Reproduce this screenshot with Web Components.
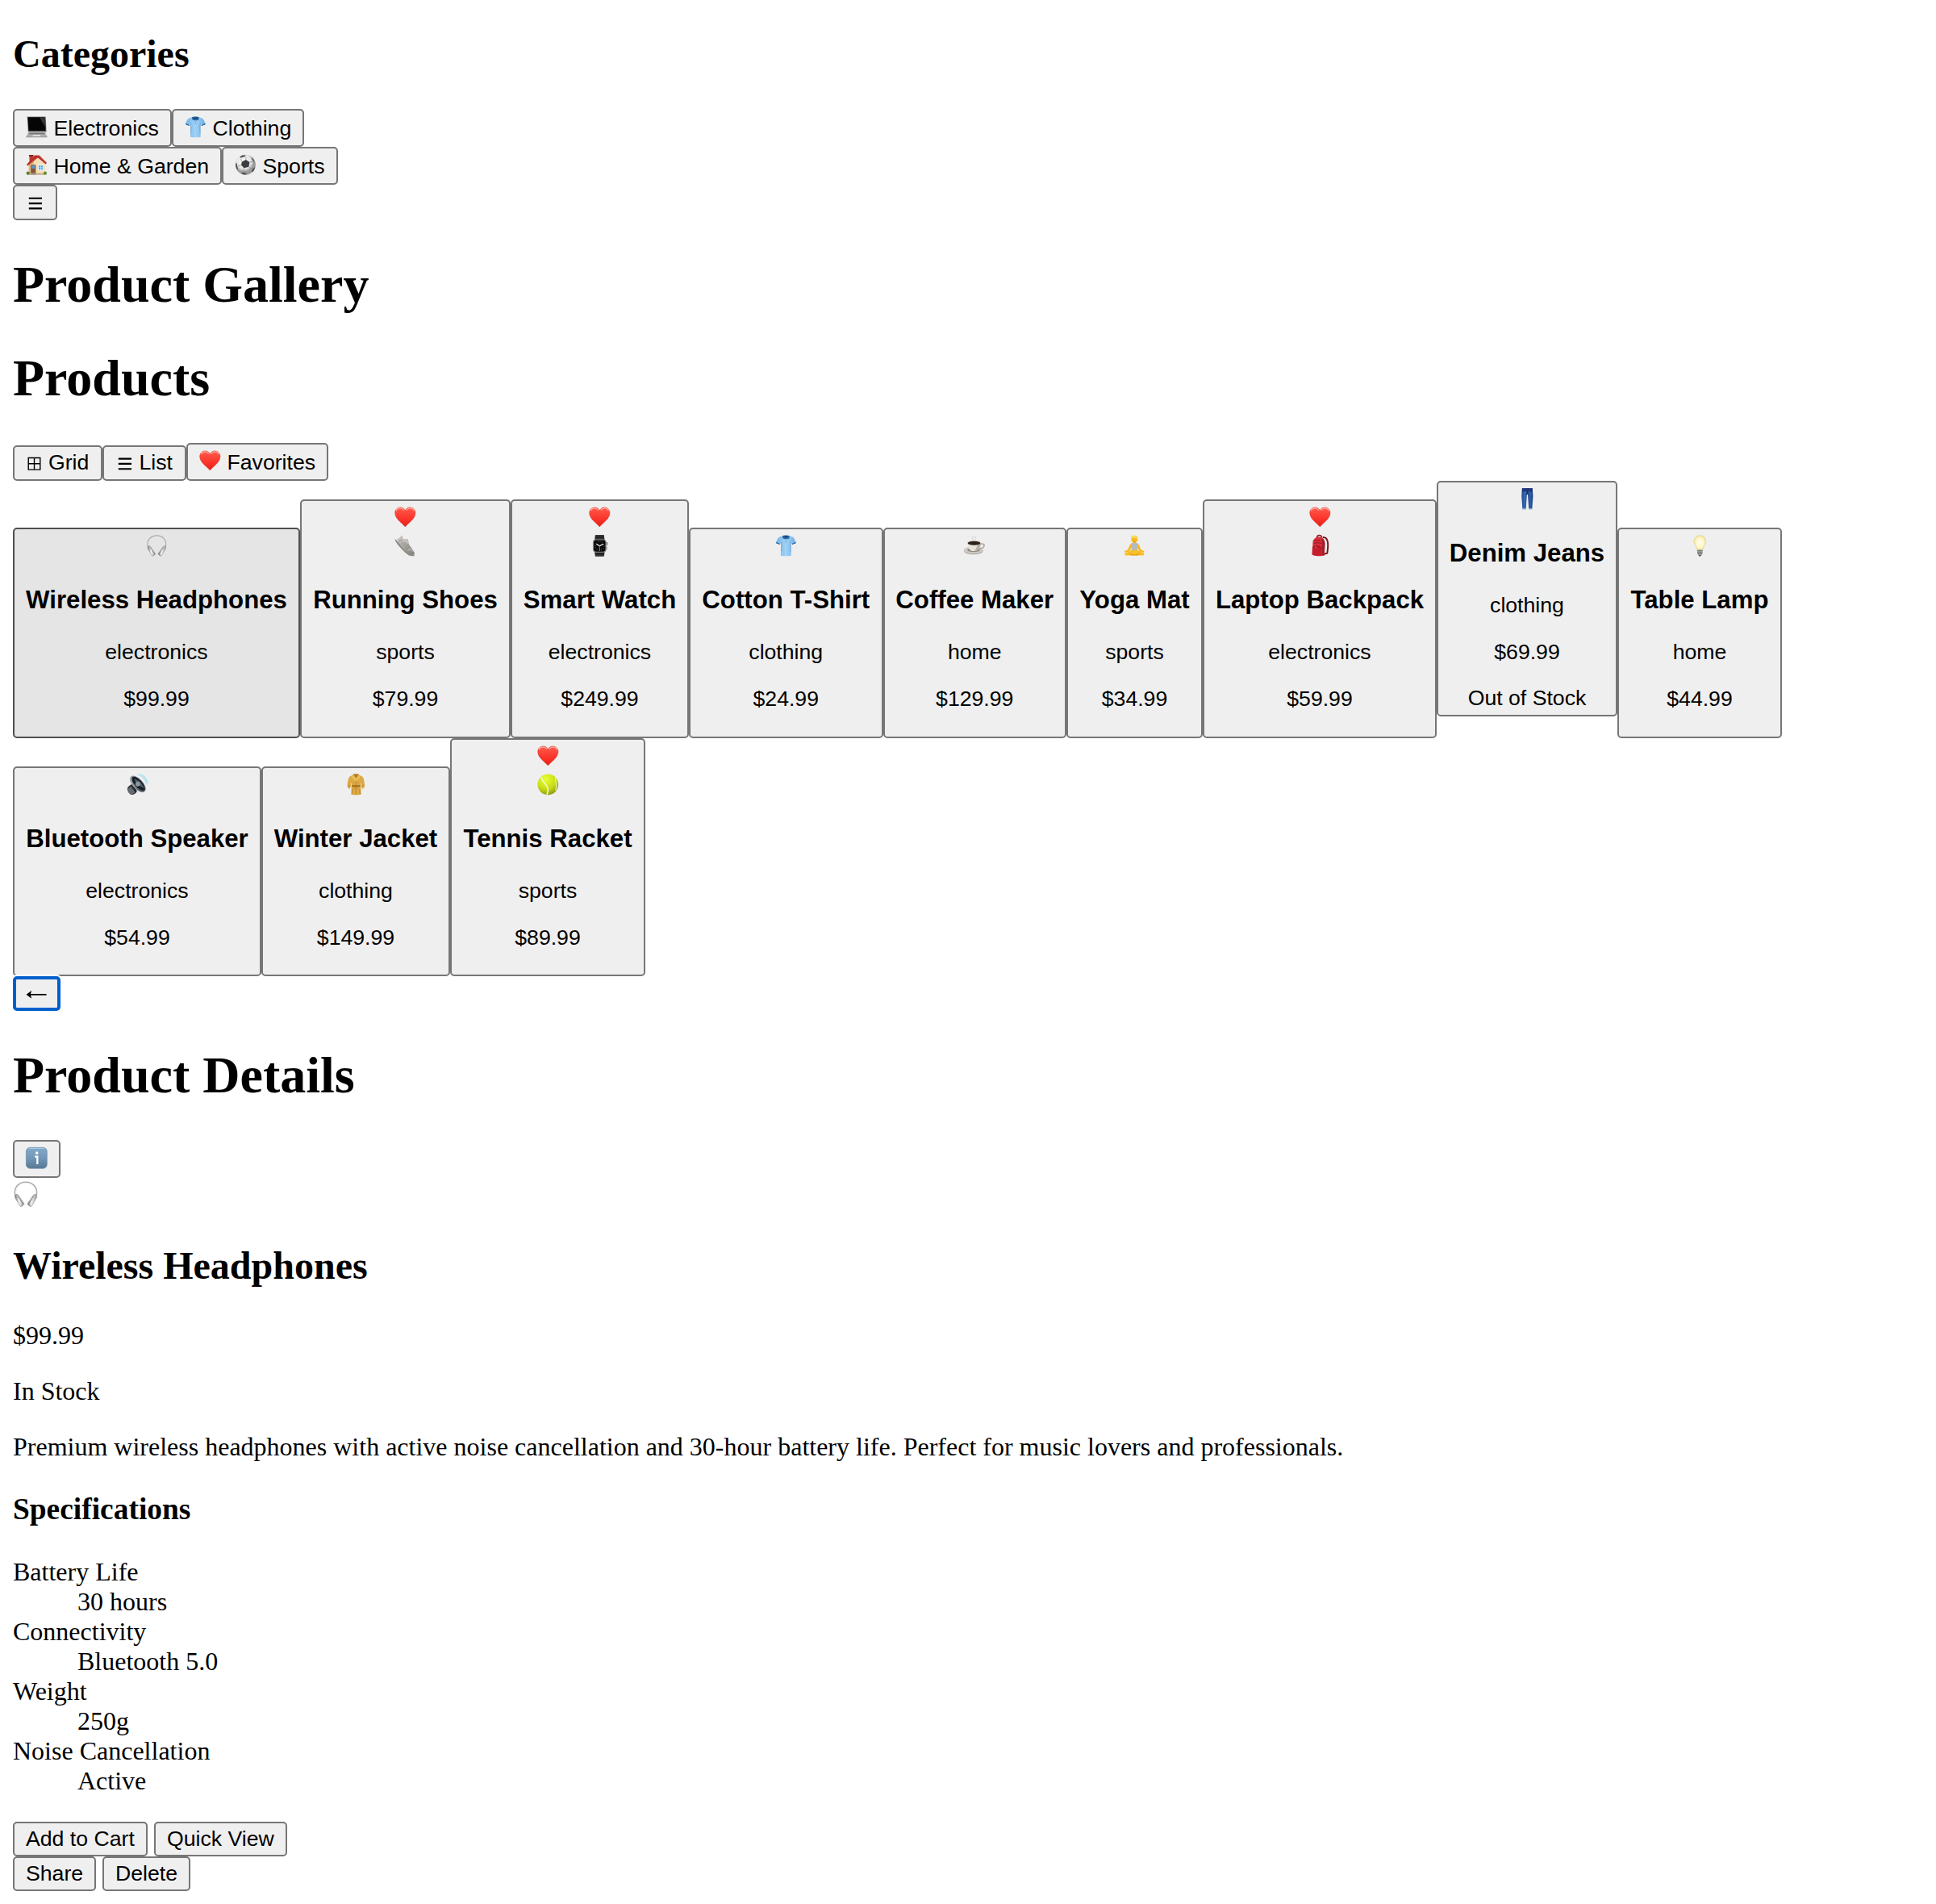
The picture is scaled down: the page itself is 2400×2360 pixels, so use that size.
<!DOCTYPE html>
<html lang="en">
<head>
<meta charset="utf-8">
<title>Product Gallery</title>
<style>
html,body{margin:0;background:#fff}
body{font:32px/37px "Liberation Serif","Times New Roman",serif;color:#000}
</style>
</head>
<body>
<gallery-app></gallery-app>
<script>
const lines = (y) => `<path d="M3.8 ${y}h16.2M3.8 ${y+6.3}h16.2M3.8 ${y+12.6}h16.2" stroke="#000" stroke-width="2.1"/>`;
const headphones = `<linearGradient id="h" x2="1" y2="0"><stop stop-color="#777"/><stop offset=".45" stop-color="#f4f4f4"/><stop offset="1" stop-color="#999"/></linearGradient>
<path d="M2.5 15.5C.2 6.5 6.300 1 13.500 1S26.800 6.500 24.500 15.500" fill="none" stroke="#aaa" stroke-width="1.300"/><path d="M3.400 13C2.800 6 7.500 2 13.500 2S24.200 6 23.600 13" fill="none" stroke="#eee" stroke-width=".7"/>
<path d="M2.200 14.500c1.200-1.300 3-.8 3.700.4l6 9-2.600 2.600-1.800-.2-5.300-9z" fill="url(#h)" stroke="#999" stroke-width=".6"/><path d="M24.800 14.500c-1.200-1.300-3-.8-3.700.4l-6 9 2.600 2.600 1.800-.2 5.300-9z" fill="url(#h)" stroke="#999" stroke-width=".6"/><path d="M5.300 15.500l5.600 8.700-1.700 1.800M21.700 15.500l-5.600 8.700 1.700 1.800" fill="none" stroke="#777" stroke-width=".8"/>`;
/* Every drawing shares a 27-unit box. */
const ICONS = {
laptop:`<linearGradient id="a" x2="0" y2="1"><stop stop-color="#d5d5d5"/><stop offset="1" stop-color="#9c9c9c"/></linearGradient><path d="M1.600.6h23.400L26 20H2.800z" fill="#858585"/><path d="M2.400 1.300h21.900l.7 17.300H3.500z" fill="#050505"/><path d="M17 1.300h7.300l.7 13.500z" fill="#333"/><path d="M3 20.200h21.600l2.300 6H.2z" fill="url(#a)"/><path d="M4 20.800h19.500l.8 2H3.200z" fill="#777"/><path d="M9 23.300h9l.7 2H8.400z" fill="#ddd"/><path d="M.2 26.200h26.700" stroke="#888" stroke-width=".7"/>`,
shirt:`<linearGradient id="b"><stop stop-color="#75b3e5"/><stop offset=".5" stop-color="#a0d2f7"/><stop offset="1" stop-color="#6faee1"/></linearGradient><path d="M9 1.300L5.200 2.500C3 4 1.700 7 1 10l4.800 1.900L7.300 9.500 7 26c3.500.7 9.500.7 13 0l-.3-16.500 1.500 2.400L26 10c-.8-3-2-6-4.200-7.500L18 1.300z" fill="url(#b)"/><path d="M1.200 9.200l4.800 2-.4.9L1 10.300zM25.800 9.200l-4.800 2 .4.9 4.600-1.800z" fill="#225a9a"/><path d="M9 1.300c1.500-1 7.500-1 9 0l-.5 3-2.800 1.200-1.200-1-1.200 1L9.500 4.300z" fill="#28659f"/><path d="M11 1.700h5l-1.500 1.600h-2z" fill="#143d6b"/><path d="M13.500 5v5M7.500 9c.5 4 .4 8 .2 12M19.500 9c-.5 4-.4 8-.2 12" stroke="#5e9bcd" stroke-width=".7" fill="none"/>`,
house:`<path d="M4.500 1.500h4.500v7H4.500z" fill="#b5392c"/><path d="M4 1h5.600v1.700H4z" fill="#79221d"/><path d="M3.700 11.500L15.500 3 24 12v12.500H3.700z" fill="#f5dfb5"/><path d="M3.700 12L10 6v18.500H3.700z" fill="#dfb981"/><path d="M1 13.300L10.700 1.500h6.300l9.500 9.700-1.700 1.300-9.300-8.300L3 14.500z" fill="#c83b32"/><path d="M1.300 13.700L13 2.200l12.400 10" fill="none" stroke="#8e2825" stroke-width="1"/><path d="M6.300 13.500h6.200v11.200H6.300z" fill="#8b5536"/><path d="M7.500 14.500h3.800v3.600H7.500z" fill="#559bd3"/><path d="M15.200 13.400h7v7h-7z" fill="#fff"/><path d="M16 14.200h5.500v5.400H16z" fill="#5aabe2"/><path d="M18.700 14v6M16 17h5.500" stroke="#fff" stroke-width=".5"/><path d="M2.500 24h22.500v2H2.500z" fill="#c4a884"/><circle cx="2.700" cy="24" r="2.100" fill="#55842c"/><circle cx="24.300" cy="24" r="2.100" fill="#62903a"/><path d="M6 24h7v2H6z" fill="#a09b94"/>`,
ball:`<radialGradient id="s" cx=".42" cy=".35"><stop stop-color="#fff"/><stop offset=".7" stop-color="#e4e4e4"/><stop offset="1" stop-color="#999"/></radialGradient><circle cx="13.500" cy="13.400" r="12.700" fill="url(#s)"/><path d="M9 9.500l5-2.300 4.600 3-1 5.800-6 1.500-3.500-3.700z" fill="#393c40"/><path d="M6.200 3.400l3.600-2.100 4.400.1-1.900 1.800-4.600 1.700zM21 3.800l2.600 3 1.500 3.500-1.300-.8-2.300-3.200zM1 12l1.700-.7.5 4 1.300 3.800-1.600.2c-1.300-2-2.100-4.600-1.900-7.300zM9.500 23l3.500.4 2.600 1.900c-2.500.8-5 .4-7.300-.8zM22.100 18.800l3.500-2.700c-.3 2.600-1.500 4.900-3.400 6.600l-1-.6z" fill="#55585c"/><path d="M9 9.500L7.700 6M14 7.200l.2-3.300M18.600 10.200l4-.8M17.600 16l3.700 2.800M11.600 17.500l-.9 5M8.100 13.800l-4.300 1.500" stroke="#888" stroke-width=".7"/>`,
heart:`<linearGradient id="r" x2="0" y2="1"><stop stop-color="#ff5b4c"/><stop offset=".65" stop-color="#fa3028"/><stop offset="1" stop-color="#dc2318"/></linearGradient><path d="M13.500 25.300C10 20.700.7 15.600.7 7.800.7 4 3.600.9 7.300.9c2.900 0 5 1.500 6.200 4C14.700 2.400 16.800.9 19.700.9c3.700 0 6.600 3.100 6.600 6.900 0 7.800-9.300 12.900-12.800 17.500z" fill="url(#r)" stroke="#d92d22" stroke-width=".5"/><path d="M2.200 5.200C4 1.300 9.300.8 12 4.700M15 4.700c2.700-3.900 8-3.400 9.800.5" fill="none" stroke="#ffaaa0" stroke-width="1.300" opacity=".85"/>`,
shoe:`<linearGradient id="o" x2="1" y2="1"><stop stop-color="#d4d1cd"/><stop offset="1" stop-color="#817d78"/></linearGradient><path d="M.7 4.500C2 4.700 3 6 4.200 8l16.500 17.300 4.500.2c.6.800-.3 1.300-1.500 1.200l-5-.5C11 20.500 4 13 .8 7z" fill="#8c8985"/><path d="M1 5.200C2.500 5 3.500 6.800 5 8.700L22.500 25" fill="none" stroke="#fff" stroke-width="1.300"/><path d="M2.500 5c2.200.3 4-1.300 6.500-4.500l2.700 5 5-.5 1.600 7 5.500 8c1.600 2 1.700 4 .6 5.100-1.500.8-3.600.4-5-.4C13 20.500 6 12 2.500 5z" fill="url(#o)"/><path d="M9 .7l2.700 5 5-.5 1.500 6-4-1-5-3z" fill="#c4c1bd"/><path d="M9 6l-4 3M11 9l-3 3M14.500 9l-4 5.500M16.500 12l-3.500 5M18.500 14l-3 5" stroke="#8b8782" stroke-width=".8"/><path d="M17 19c2-1.500 4.500-.5 6.500 2" stroke="#ddd" stroke-width=".8" fill="none"/>`,
watch:`<path d="M8 0h11l1 8H7zM7 19h13l-1 8H8z" fill="#363636"/><path d="M8 3h11M7.500 24h12" stroke="#111" stroke-width="1"/><rect x="5" y="5.500" width="17" height="16.500" rx="4" fill="#858585"/><rect x="6.200" y="6.700" width="14.500" height="14.200" rx="2.800" fill="#080808"/><path d="M22 9h1.500v4H22zM22.200 15h.8v3h-.8z" fill="#777"/><circle cx="13.500" cy="13.800" r="5.600" fill="none" stroke="#bbb" stroke-width=".8" stroke-dasharray=".8 2.100"/><path d="M13.500 14L9.500 11.500M13.500 14l4.500-2.700" stroke="#fff" stroke-width="1.200"/><path d="M13.500 13v7" stroke="#f39a27" stroke-width=".8"/>`,
cup:`<ellipse cx="12" cy="20" rx="12" ry="4.600" fill="#a5a19a"/><ellipse cx="12" cy="19" rx="12" ry="4.600" fill="#cfcbc4"/><ellipse cx="12.200" cy="19" rx="8" ry="2.400" fill="#8f8a82"/><path d="M21 11.500c6-2 6.300 5.300-1.800 5.700" fill="none" stroke="#a8a298" stroke-width="1.600"/><path d="M4 10c.2 5 3 9.600 6 10.200h5c3.500-1 6.300-5.200 6.500-10.200z" fill="#e6e3dc"/><path d="M17 12c-.5 3-2 6-4 8h2c3.500-1 6.300-5.200 6.500-10z" fill="#b5afa5"/><ellipse cx="12.700" cy="10" rx="8.700" ry="2.900" fill="#d5d0c8"/><ellipse cx="12.700" cy="10.300" rx="7.900" ry="2.500" fill="#302018"/><path d="M11 7c-2-3 2-3 0-5.500M14 6.500c2.500-2.500-1-3 1-5" fill="none" stroke="#cfcfcf" stroke-width="1"/>`,
yoga:`<circle cx="13.500" cy="5.500" r="4" fill="#f7b923"/><path d="M9.300 5C8.500.5 12 0 14 1c3-.8 4.700 1.500 3.700 4.500-1.700-2-5-2.500-8.400-.5z" fill="#fbd75b"/><path d="M12 8h3v3h-3z" fill="#eba71d"/><path d="M10.500 10.300c-3 .7-3.500 5-5.200 8.200L1 20.500l.7 1.500 5.500-1.500 4.300-7M16.500 10.300c3 .7 3.500 5 5.200 8.200l4.300 2-.7 1.500-5.500-1.500-4.300-7" fill="#f7b923"/><path d="M9.400 10.600l2.200-.8c1 1.200 2.800 1.200 3.800 0l2.200.8L17 20h-7z" fill="#b3bac2"/><path d="M10 19h7l8 3.500c1.500 1 .8 3.300-1 3.400H3C1.200 25.800.5 23.500 2 22.500z" fill="#f9c02c"/><path d="M6 22.500l7.500 2.300 7.500-2.300-4 3.300h-7z" fill="#e59f17"/>`,
backpack:`<path d="M17 3c7-1 7.500 9 5.500 20l-4 1" fill="none" stroke="#761b20" stroke-width="2"/><path d="M9.500 4c0-4.500 6-4.800 6.300-.3" fill="none" stroke="#8c1d25" stroke-width="1.600"/><path d="M4.500 9C5 4.500 9 2 13 2.500s6.500 3.200 6.700 8L19 25.500c-4.500 1.800-12 1-15-.5z" fill="#d92e38"/><path d="M16 4c3 1.500 3.800 5 3.700 8L19 25.500l-3 .7z" fill="#a61d28"/><path d="M4 15c4-3.300 9-2.500 12 1l-.8 9.700C11 26.500 6 26 3.500 24.500z" fill="#c41e2b"/><path d="M4.500 16c4-2.700 8-1.800 11 1M6 8.500c2-2.500 6-2.500 8.500-.3M5.500 11c3-1.500 7-1.500 10 0" fill="none" stroke="#781922" stroke-width=".8"/><path d="M8 14v3" stroke="#f46d71" stroke-width=".8"/>`,
jeans:`<linearGradient id="j"><stop stop-color="#1e4991"/><stop offset=".3" stop-color="#386db5"/><stop offset=".5" stop-color="#203c7a"/><stop offset=".75" stop-color="#2e63ac"/><stop offset="1" stop-color="#1a3c80"/></linearGradient><path d="M7 0h13l.7 10-1.200 16.500h-4.100L14.200 8h-1.200L11.800 26.500H7.500L6.300 10z" fill="url(#j)"/><path d="M7 .3h13v3H7z" fill="#26377c"/><path d="M7 3.300h13M13.500 3v5M7 5l3-1.500M20 5l-3-1.500" stroke="#162c63" stroke-width=".8"/><path d="M7.500 25.800h4.300M15.400 25.800h4.100" stroke="#86b6df" stroke-width="1.200"/>`,
bulb:`<radialGradient id="u"><stop stop-color="#fffef4"/><stop offset=".7" stop-color="#fff4c0"/><stop offset="1" stop-color="#eadb91"/></radialGradient><path d="M9.700 18.500C9.400 14.500 6 12.500 6 8A7.500 7.500 0 0121 8c0 4.500-3.400 6.500-3.700 10.500z" fill="url(#u)" stroke="#e8d98d" stroke-width=".6"/><path d="M11.500 18l-.5-6M15.500 18l.5-6" stroke="#fffdf0" stroke-width="1"/><path d="M10 18.500h7l-.3 5.500-1.400 1.800h-3.600L10.300 24z" fill="#aaa"/><path d="M10 20h7M10.200 22h6.600M10.700 24h5.600" stroke="#656565" stroke-width=".8"/><path d="M11.800 25.500h3.400l-.8 1.300h-1.800z" fill="#333"/>`,
speaker:`<linearGradient id="k" x2="1" y2="1"><stop stop-color="#e0e4e7"/><stop offset=".4" stop-color="#62686e"/><stop offset="1" stop-color="#16191c"/></linearGradient><path d="M1 18c1-2.300 5-4.500 7-6l5 10c-1 2.500-4.300 4.600-7 4.300C3 25.500.6 21 1 18z" fill="#26292d"/><path d="M1.300 19l4-3.300 5.500 7.800-4.800 2.700c-2.500-.5-4.700-3.500-4.700-7.200z" fill="#656b71"/><ellipse cx="14" cy="13" rx="6.200" ry="12.500" transform="rotate(-43 14 13)" fill="url(#k)" stroke="#9aa0a5" stroke-width=".7"/><ellipse cx="14.600" cy="12.300" rx="4.700" ry="10.600" transform="rotate(-43 14.600 12.300)" fill="#17212c"/><path d="M9 6.500c3 5 7 9 13 12-2-6-7-11-13-12z" fill="#525e69"/><circle cx="14" cy="13" r="3" fill="#8b969e"/><path d="M13 1c6 1 11 6.500 12.700 12.300M17 .6c5 2 8.200 6 9.500 10.600" fill="none" stroke="#a5e1ec" stroke-width="1.200"/>`,
coat:`<path d="M9.500 1.500L5 4C3 8 2.200 13 3 17.500l3 1.700 2-9-.5 16c4 .8 8.500.8 12.500 0L19 10l2 9.200 3-1.700c.8-4.500 0-9.500-2-13.500l-4.500-2.500z" fill="#dda943"/><path d="M9.500 1.200L13.500 8l4-6.800-1.200-1h-5.600z" fill="#b57e24"/><path d="M10 .8L8 5l3.500 3 2 1.500L15.500 8 19 5 17 .8l-3.500 5z" fill="#eabd58"/><path d="M8 14.500h11v1.800H8z" fill="#9c681a"/><path d="M13.500 9v17M11 11v.7M16 11v.7M13 15.500l-2 4M14 16l2.500 3M9 19c-.3 2-.3 4-.5 6.500M18 19c.3 2 .3 4 .5 6.500M3.300 14.500l3.300 1.200M23.700 14.500l-3.300 1.200" fill="none" stroke="#a17123" stroke-width=".6"/>`,
tennis:`<radialGradient id="t" cx=".4" cy=".25" r=".8"><stop stop-color="#e8ff31"/><stop offset=".6" stop-color="#c7dc16"/><stop offset="1" stop-color="#86960c"/></radialGradient><circle cx="13.500" cy="13.500" r="13" fill="url(#t)"/><path d="M5.500 4c-.5 6 8 10 8 16 0 3-.8 5-1.500 6.300" fill="none" stroke="#f3f7d4" stroke-width="1.700"/><path d="M23 4.800c-1.700 4 3 8 0 16" fill="none" stroke="#e6efb0" stroke-width="1.300"/>`,
info:`<linearGradient id="i" x2="0" y2="1"><stop stop-color="#83aacb"/><stop offset=".5" stop-color="#7296b7"/><stop offset="1" stop-color="#587995"/></linearGradient><rect x=".4" y=".4" width="26.200" height="26.200" rx="4.800" fill="url(#i)" stroke="#668aaa" stroke-width=".7"/><path d="M3.500 1.500h20" stroke="#a9c9e2" stroke-width="1"/><circle cx="13.900" cy="7.200" r="1.800" fill="#fff"/><path d="M11.300 11.700h3.200V21.300" fill="none" stroke="#fff" stroke-width="2.300"/>`,
headphones
};
const GLYPHS = {
menu:[22.7,31,lines(11.8)],
list:[22,31,lines(10.6)],
grid:[20.6,31,`<path d="M3.200 9.500h14.600v14.600H3.200zM10.500 9.500v14.600M3.200 16.800h14.600" fill="none" stroke="#000" stroke-width="1.400"/>`],
back:[26.7,31,`<path d="M4 17.800h21.600" stroke="#000" stroke-width="1.700"/><path d="M.6 17.800l6.600-5-1.500 5 1.500 5z" fill="#000"/>`]
};
class UiIcon extends HTMLElement{
  connectedCallback(){
    const n=this.getAttribute('name'), s=this.getAttribute('size')||26.67;
    const g=GLYPHS[n];
    const [w,h,body]=g||[s,s,ICONS[n]];
    this.attachShadow({mode:'open'}).innerHTML=`<style>:host{display:block;flex:none}svg{display:block;overflow:visible}</style><svg aria-hidden="true" width="${w}" height="${h}" viewBox="0 0 ${g?w:27} ${g?h:27}">${body}</svg>`;
  }
}
customElements.define('ui-icon',UiIcon);

class UiButton extends HTMLElement{
  connectedCallback(){
    const icon=this.getAttribute('icon'), glyph=icon in GLYPHS;
    const emoji=icon&&!glyph;
    const top=emoji?7:(this.getAttribute('top')||(glyph?3:4));
    this.attachShadow({mode:'open'}).innerHTML=`<style>
:host{display:block;flex:none;width:${this.getAttribute('w')}px}
button{display:flex;gap:${glyph?7.4:7.8}px;box-sizing:border-box;width:100%;height:${emoji?47:this.getAttribute('h')||43}px;margin:0;padding:${top}px 0 0 14px;border:2px solid #767676;border-radius:5px;background:#efefef;color:#000;font:26.667px/31px "Liberation Sans",Arial,sans-serif;white-space:nowrap;text-align:left;align-items:flex-start}
:host([focused]) button{border:4px solid #005fcc;padding:${top-2}px 0 0 12px;box-shadow:0 0 0 2px #fff}
:host([focused]){position:relative}
</style><button>${icon?`<ui-icon name="${icon}"></ui-icon>`:''}<slot></slot></button>`;
  }
}
customElements.define('ui-button',UiButton);

class ProductCard extends HTMLElement{
  connectedCallback(){
    const a=n=>this.getAttribute(n), f=this.hasAttribute('fav'), out=this.hasAttribute('out');
    this.attachShadow({mode:'open'}).innerHTML=`<style>
:host{display:block;flex:none;width:${a('w')}px;margin-bottom:${out?27:0}px}
button{display:flex;flex-direction:column;align-items:center;box-sizing:border-box;width:100%;height:calc(${out?291:f?295:260}px + var(--card-extra,0px));margin:0;padding:4px 0 0;border:2px solid #767676;border-radius:5px;background:#efefef;color:#000;font:26.667px/31px "Liberation Sans",Arial,sans-serif;white-space:nowrap}
:host([active]) button{background:#e5e5e5;border-color:#4f4f4f}
ui-icon{height:32.5px;padding-top:2.500px}
h3{font-size:31.2px;line-height:35px;margin:30.500px 0 32.500px}
p{margin:0 0 26.700px}
</style><button>${f?'<ui-icon name="heart"></ui-icon>':''}<ui-icon name="${a('icon')}"></ui-icon><h3><slot></slot></h3><p>${a('category')}</p><p>${a('price')}</p>${out?'<span>Out of Stock</span>':''}</button>`;
  }
}
customElements.define('product-card',ProductCard);

class CategoryNav extends HTMLElement{
  connectedCallback(){
    this.attachShadow({mode:'open'}).innerHTML=`<style>:host{display:block}h2{font-size:48px;line-height:55px;margin:0 0 41px}div{display:flex}</style>
<h2>Categories</h2>
<div><ui-button icon="laptop" w="197">Electronics</ui-button><ui-button icon="shirt" w="164">Clothing</ui-button></div>
<div><ui-button icon="house" w="259">Home &amp; Garden</ui-button><ui-button icon="ball" w="144">Sports</ui-button></div>`;
  }
}
customElements.define('category-nav',CategoryNav);

class ProductList extends HTMLElement{
  connectedCallback(){
    this.attachShadow({mode:'open'}).innerHTML=`<style>:host{display:block}h1{font-size:64px;line-height:73px;margin:43px 0}.views{display:flex;align-items:flex-end;margin-top:44px}.row{display:flex;align-items:flex-end}.first{height:319px;--card-extra:1px}.second{height:295px}</style>
<ui-button icon="menu" w="55" h="44"></ui-button>
<h1>Product Gallery</h1><h1>Products</h1>
<div class="views"><ui-button icon="grid" w="111" h="44" top="3.5">Grid</ui-button><ui-button icon="list" w="104" h="44" top="3.5">List</ui-button><ui-button icon="heart" w="176">Favorites</ui-button></div>
<div class="row first">
<product-card active w="356" icon="headphones" category="electronics" price="$99.99">Wireless Headphones</product-card>
<product-card fav w="261" icon="shoe" category="sports" price="$79.99">Running Shoes</product-card>
<product-card fav w="221" icon="watch" category="electronics" price="$249.99">Smart Watch</product-card>
<product-card w="240.500" icon="shirt" category="clothing" price="$24.99">Cotton T-Shirt</product-card>
<product-card w="227.500" icon="cup" category="home" price="$129.99">Coffee Maker</product-card>
<product-card w="169" icon="yoga" category="sports" price="$34.99">Yoga Mat</product-card>
<product-card fav w="290" icon="backpack" category="electronics" price="$59.99">Laptop Backpack</product-card>
<product-card out w="224" icon="jeans" category="clothing" price="$69.99">Denim Jeans</product-card>
<product-card w="204" icon="bulb" category="home" price="$44.99">Table Lamp</product-card>
</div>
<div class="row second">
<product-card w="308" icon="speaker" category="electronics" price="$54.99">Bluetooth Speaker</product-card>
<product-card w="234" icon="coat" category="clothing" price="$149.99">Winter Jacket</product-card>
<product-card fav w="242" icon="tennis" category="sports" price="$89.99">Tennis Racket</product-card>
</div>`;
  }
}
customElements.define('product-list',ProductList);

class ProductDetails extends HTMLElement{
  connectedCallback(){
    this.attachShadow({mode:'open'}).innerHTML=`<style>:host{display:block}h1{font-size:64px;line-height:73px;margin:43px 0 44px}h2{font-size:48px;line-height:55px;margin:0 0 41px}.hero{height:77px;padding-top:4px}p{margin:0 0 32px}h3{font-size:37.44px;line-height:43px;margin:37px 0 38px}dl{margin:0 0 32px}dd{margin-left:80px}.actions{display:flex;gap:8px}</style>
<ui-button focused icon="back" w="59" h="43" top="3"></ui-button>
<h1>Product Details</h1>
<ui-button icon="info" w="59"></ui-button>
<div class="hero"><ui-icon name="headphones" size="32"></ui-icon></div>
<h2>Wireless Headphones</h2>
<p>$99.99</p><p>In Stock</p><p>Premium wireless headphones with active noise cancellation and 30-hour battery life. Perfect for music lovers and professionals.</p>
<h3>Specifications</h3>
<dl><dt>Battery Life</dt><dd>30 hours</dd><dt>Connectivity</dt><dd>Bluetooth 5.0</dd><dt>Weight</dt><dd>250g</dd><dt>Noise Cancellation</dt><dd>Active</dd></dl>
<div class="actions"><ui-button w="167">Add to Cart</ui-button><ui-button w="165">Quick View</ui-button></div>
<div class="actions"><ui-button w="103">Share</ui-button><ui-button w="109">Delete</ui-button></div>`;
  }
}
customElements.define('product-details',ProductDetails);

class GalleryApp extends HTMLElement{
  connectedCallback(){
    this.attachShadow({mode:'open'}).innerHTML=`<style>:host{display:block;box-sizing:border-box;height:2360px;padding:39px 16px 0}</style><category-nav></category-nav><product-list></product-list><product-details></product-details>`;
  }
}
customElements.define('gallery-app',GalleryApp);
</script>
</body>
</html>
